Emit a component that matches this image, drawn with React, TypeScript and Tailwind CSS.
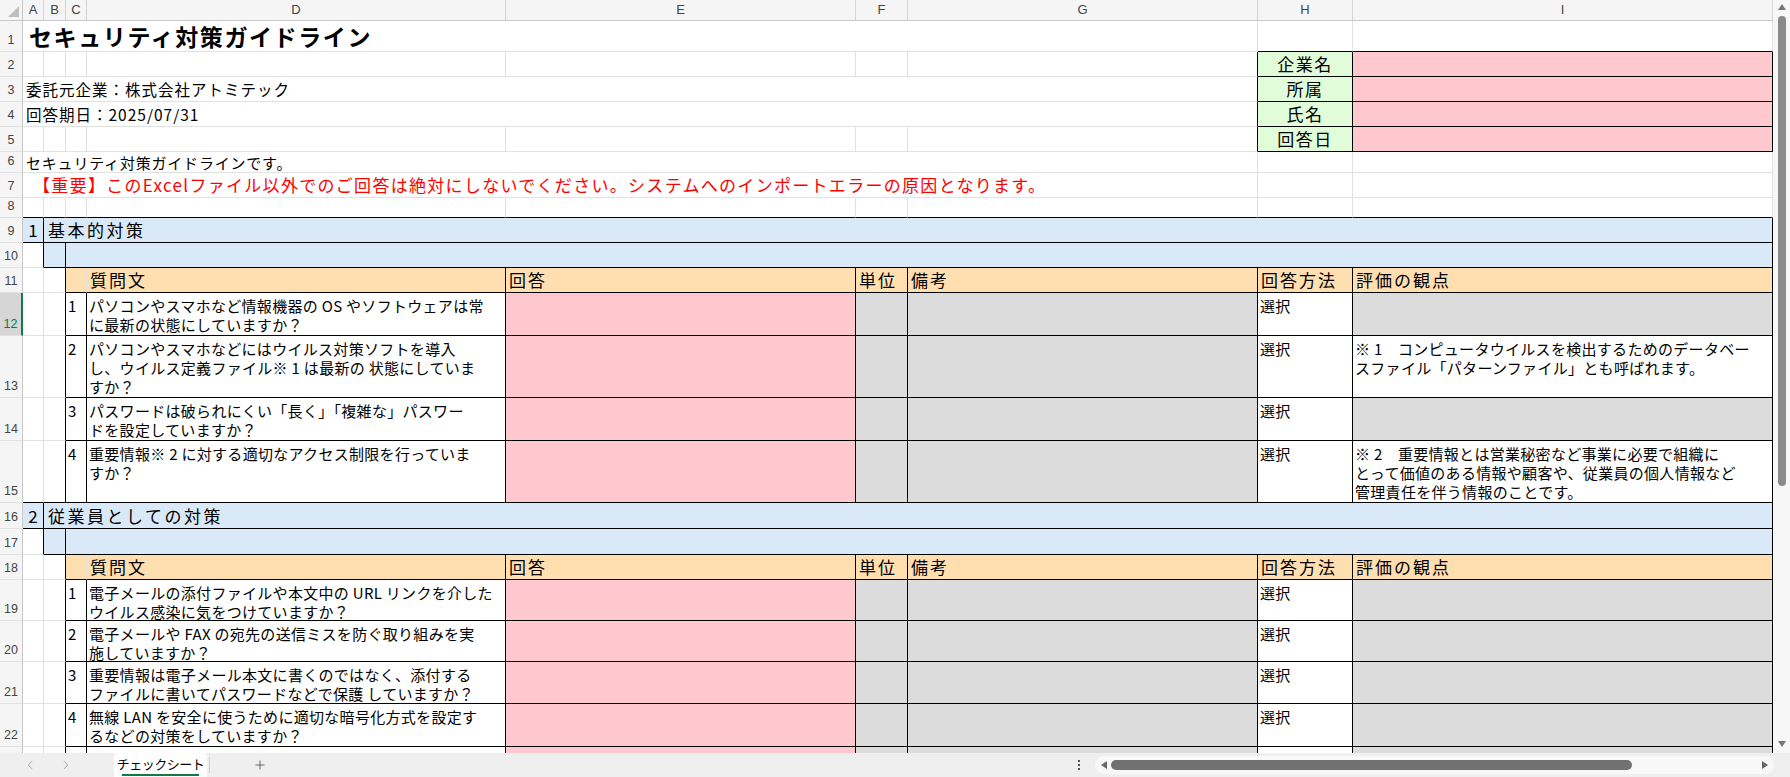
import React from "react";
import { ChevronLeft, ChevronRight, Plus } from "lucide-react";

const FONT = { fontFamily: '"Noto Sans CJK JP", "Noto Sans", sans-serif' };
const COLS = [21, 22, 21, 419, 350, 52, 350, 95, 420];
const LETTERS = ["A", "B", "C", "D", "E", "F", "G", "H", "I"];

type CellSpec = {
  c?: React.ReactNode;
  s?: number;
  bg?: string;
  r?: boolean;
  b?: boolean;
  cls?: string;
};

function Cell({ spec }: { spec: CellSpec }) {
  const span = spec.s ?? 1;
  return (
    <div
      className={`relative overflow-visible border-r border-b ${spec.r ? "border-r-black" : "border-r-[#e1e1e1]"} ${spec.b ? "border-b-black" : "border-b-[#e1e1e1]"} ${spec.bg ?? ""} ${spec.cls ?? ""}`}
      style={{ gridColumn: `span ${span} / span ${span}` }}
    >
      {spec.c}
    </div>
  );
}

function Row({ n, h, cells, sel }: { n: number | string; h: number; cells: CellSpec[]; sel?: boolean }) {
  return (
    <div className="flex shrink-0" style={{ height: h }}>
      <div
        className={`w-[23px] shrink-0 flex items-end justify-center pb-[1px] text-[12.5px] border-b border-b-[#e1e1e1] ${sel ? "bg-[#d6d6d6] text-[#107c41] border-r-2 border-r-[#107c41]" : "bg-[#f5f5f5] text-[#444] border-r border-r-[#c8c8c8]"}`}
        style={{ fontFamily: '"Liberation Sans", sans-serif' }}
      >
        {n}
      </div>
      <div className="grid grid-cols-[21px_22px_21px_419px_350px_52px_350px_95px_420px]">
        {cells.map((c, i) => (
          <Cell key={i} spec={c} />
        ))}
      </div>
    </div>
  );
}

const BLUE = "bg-[#d9e9f7]";
const ORANGE = "bg-[#ffdfb0]";
const PINK = "bg-[#ffc7ce]";
const GRAY = "bg-[#dcdcdc]";
const GREEN = "bg-[#e1fcd9]";

const E: CellSpec = {};
const txt = "text-[15px] leading-[19px] whitespace-nowrap text-black";

function Q({ children }: { children: React.ReactNode }) {
  return <div className={`absolute left-[2px] top-[3px] ${txt} tracking-[0.3px]`}>{children}</div>;
}

function itemRow(n: number, h: number, num: string, q: React.ReactNode, note: React.ReactNode | null, last = false, sel = false) {
  return (
    <Row
      n={n}
      h={h}
      sel={sel}
      cells={[
        { b: last },
        { r: true, b: last },
        { r: true, b: true, c: <Q>{num}</Q> },
        { r: true, b: true, c: <Q>{q}</Q> },
        { r: true, b: true, bg: PINK },
        { r: true, b: true, bg: GRAY },
        { r: true, b: true, bg: GRAY },
        { r: true, b: true, c: <Q>選択</Q> },
        note ? { r: true, b: true, c: <Q>{note}</Q> } : { r: true, b: true, bg: GRAY },
      ]}
    />
  );
}

function sectionRows(base: number, num: string, title: string) {
  const hd = (t: string): CellSpec => ({
    r: true,
    b: true,
    bg: ORANGE,
    c: <div className="absolute left-[3px] bottom-[1px] text-[17px] leading-[22px] tracking-[2px] whitespace-nowrap">{t}</div>,
  });
  return (
    <>
      <Row
        n={base}
        h={base === 9 ? 25 : 26}
        cells={[
          { r: true, b: true, bg: BLUE, c: <div className="absolute inset-0 flex items-end justify-center pb-[1px] text-[17px] leading-[22px]">{num}</div> },
          { s: 8, r: true, b: true, bg: BLUE, c: <div className="absolute left-[4px] bottom-[1px] text-[17px] leading-[22px] tracking-[2.5px] whitespace-nowrap">{title}</div> },
        ]}
      />
      <Row
        n={base + 1}
        h={base === 9 ? 25 : 26}
        cells={[{ r: true }, { r: true, b: true, bg: BLUE }, { s: 7, r: true, b: true, bg: BLUE }]}
      />
      <Row
        n={base + 2}
        h={25}
        cells={[E, { r: true }, { b: true, bg: ORANGE }, hd("質問文"), hd("回答"), hd("単位"), hd("備考"), hd("回答方法"), hd("評価の観点")]}
      />
    </>
  );
}

const lbl = (t: string): CellSpec => ({
  r: true,
  b: true,
  bg: GREEN,
  c: <div className="absolute inset-0 flex items-end justify-center pb-[1px] text-[17px] leading-[22px] tracking-[1.5px]">{t}</div>,
});

export default function App() {
  return (
    <div className="w-[1790px] h-[777px] overflow-hidden flex flex-col bg-white text-black" style={FONT}>
      <div className="flex flex-1 min-h-0">
        <div className="flex-1 min-w-0 overflow-hidden flex flex-col">
          <div className="flex shrink-0 h-[21px] bg-[#f5f5f5] border-b border-b-[#c8c8c8]" style={{ fontFamily: '"Liberation Sans", sans-serif' }}>
            <div className="w-[23px] shrink-0 border-r border-r-[#c8c8c8] relative">
              <div className="absolute right-[3px] bottom-[3px] w-0 h-0 border-l-[11px] border-l-transparent border-b-[11px] border-b-[#c0c0c0]" />
            </div>
            {COLS.map((w, i) => (
              <div key={i} style={{ width: w }} className="shrink-0 flex items-center justify-center text-[13px] text-[#444] border-r border-r-[#d4d4d4]">
                {LETTERS[i]}
              </div>
            ))}
          </div>

          <Row
            n={1}
            h={31}
            cells={[
              { s: 7, c: <div className="absolute left-[6px] bottom-[1px] text-[23px] leading-[28px] font-bold tracking-[1.6px] whitespace-nowrap">セキュリティ対策ガイドライン</div> },
              { b: true },
              { b: true },
            ]}
          />
          <Row n={2} h={25} cells={[E, E, E, E, E, E, { r: true }, lbl("企業名"), { r: true, b: true, bg: PINK }]} />
          <Row
            n={3}
            h={25}
            cells={[
              { s: 7, r: true, c: <div className="absolute left-[3px] bottom-[2px] text-[15.5px] leading-[19px] tracking-[1px] whitespace-nowrap">委託元企業：株式会社アトミテック</div> },
              lbl("所属"),
              { r: true, b: true, bg: PINK },
            ]}
          />
          <Row
            n={4}
            h={25}
            cells={[
              { s: 7, r: true, c: <div className="absolute left-[3px] bottom-[2px] text-[15.5px] leading-[19px] tracking-[1px] whitespace-nowrap">回答期日：2025/07/31</div> },
              lbl("氏名"),
              { r: true, b: true, bg: PINK },
            ]}
          />
          <Row n={5} h={25} cells={[E, E, E, E, E, E, { r: true }, lbl("回答日"), { r: true, b: true, bg: PINK }]} />
          <Row
            n={6}
            h={21}
            cells={[
              { s: 7, c: <div className="absolute left-[3px] bottom-[0px] text-[15px] leading-[19px] tracking-[0.8px] whitespace-nowrap">セキュリティ対策ガイドラインです。</div> },
              E,
              E,
            ]}
          />
          <Row
            n={7}
            h={25}
            cells={[
              { s: 7, c: <div className="absolute left-[10px] bottom-[1px] text-[17px] leading-[22px] tracking-[1.3px] whitespace-nowrap text-[#ff0000]">【重要】このExcelファイル以外でのご回答は絶対にしないでください。システムへのインポートエラーの原因となります。</div> },
              E,
              E,
            ]}
          />
          <Row n={8} h={20} cells={Array.from({ length: 9 }, () => ({ b: true }))} />

          {sectionRows(9, "1", "基本的対策")}
          {itemRow(12, 43, "1", <>パソコンやスマホなど情報機器の OS やソフトウェアは常<br />に最新の状態にしていますか？</>, null, false, true)}
          {itemRow(13, 62, "2", <>パソコンやスマホなどにはウイルス対策ソフトを導入<br />し、ウイルス定義ファイル※ 1 は最新の 状態にしていま<br />すか？</>, <>※ 1　コンピュータウイルスを検出するためのデータベー<br />スファイル「パターンファイル」とも呼ばれます。</>)}
          {itemRow(14, 43, "3", <>パスワードは破られにくい「長く」「複雑な」パスワー<br />ドを設定していますか？</>, null)}
          {itemRow(15, 62, "4", <>重要情報※ 2 に対する適切なアクセス制限を行っていま<br />すか？</>, <>※ 2　重要情報とは営業秘密など事業に必要で組織に<br />とって価値のある情報や顧客や、従業員の個人情報など<br />管理責任を伴う情報のことです。</>, true)}

          {sectionRows(16, "2", "従業員としての対策")}
          {itemRow(19, 41, "1", <>電子メールの添付ファイルや本文中の URL リンクを介した<br />ウイルス感染に気をつけていますか？</>, null)}
          {itemRow(20, 41, "2", <>電子メールや FAX の宛先の送信ミスを防ぐ取り組みを実<br />施していますか？</>, null)}
          {itemRow(21, 42, "3", <>重要情報は電子メール本文に書くのではなく、添付する<br />ファイルに書いてパスワードなどで保護 していますか？</>, null)}
          {itemRow(22, 43, "4", <>無線 LAN を安全に使うために適切な暗号化方式を設定す<br />るなどの対策をしていますか？</>, null)}
          {itemRow(23, 41, "5", <>インターネットを介したウイルス感染やＳＮＳへの書き込<br />みなどによるトラブルへの対策をしていますか？</>, null)}
        </div>

        <div className="w-[17px] shrink-0 bg-[#f7f7f7] flex flex-col items-center relative">
          <div className="mt-[4px] w-0 h-0 border-l-[4px] border-l-transparent border-r-[4px] border-r-transparent border-b-[6px] border-b-[#777]" />
          <div className="w-[8px] h-[470px] mt-[6px] rounded-full bg-[#8a8a8a]" />
          <div className="absolute bottom-[6px] w-0 h-0 border-l-[4px] border-l-transparent border-r-[4px] border-r-transparent border-t-[6px] border-t-[#777]" />
        </div>
      </div>

      <div className="h-[24px] shrink-0 bg-[#efefef] flex items-stretch relative">
        <div className="w-[114px] flex items-center text-[#9a9a9a]">
          <ChevronLeft size={14} strokeWidth={1.5} className="ml-[23px]" />
          <ChevronRight size={14} strokeWidth={1.5} className="ml-[22px]" />
        </div>
        <div className="w-[93px] bg-white flex items-center justify-center relative rounded-t-[3px]">
          <span className="text-[13px] leading-[16px] tracking-[-0.5px] text-black mb-[2px]">チェックシート</span>
          <div className="absolute bottom-[1px] left-[8px] right-[8px] h-[2px] bg-[#107c41]" />
        </div>
        <div className="w-px bg-[#d0d0d0] my-[4px] ml-[2px]" />
        <div className="ml-[43px] flex items-center text-[#555]">
          <Plus size={14} strokeWidth={1.5} />
        </div>
        <div className="absolute left-[1078px] top-[7px] flex flex-col gap-[2px]">
          <div className="w-[2px] h-[2px] bg-[#555]" />
          <div className="w-[2px] h-[2px] bg-[#555]" />
          <div className="w-[2px] h-[2px] bg-[#555]" />
        </div>
        <div className="absolute left-[1095px] top-[3px] w-[679px] h-[18px] bg-[#f8f8f8] rounded-full flex items-center">
          <div className="ml-[6px] w-0 h-0 border-t-[4px] border-t-transparent border-b-[4px] border-b-transparent border-r-[6px] border-r-[#666]" />
          <div className="ml-[4px] w-[521px] h-[10px] rounded-full bg-[#717171]" />
          <div className="ml-auto mr-[6px] w-0 h-0 border-t-[4px] border-t-transparent border-b-[4px] border-b-transparent border-l-[6px] border-l-[#666]" />
        </div>
      </div>
    </div>
  );
}
